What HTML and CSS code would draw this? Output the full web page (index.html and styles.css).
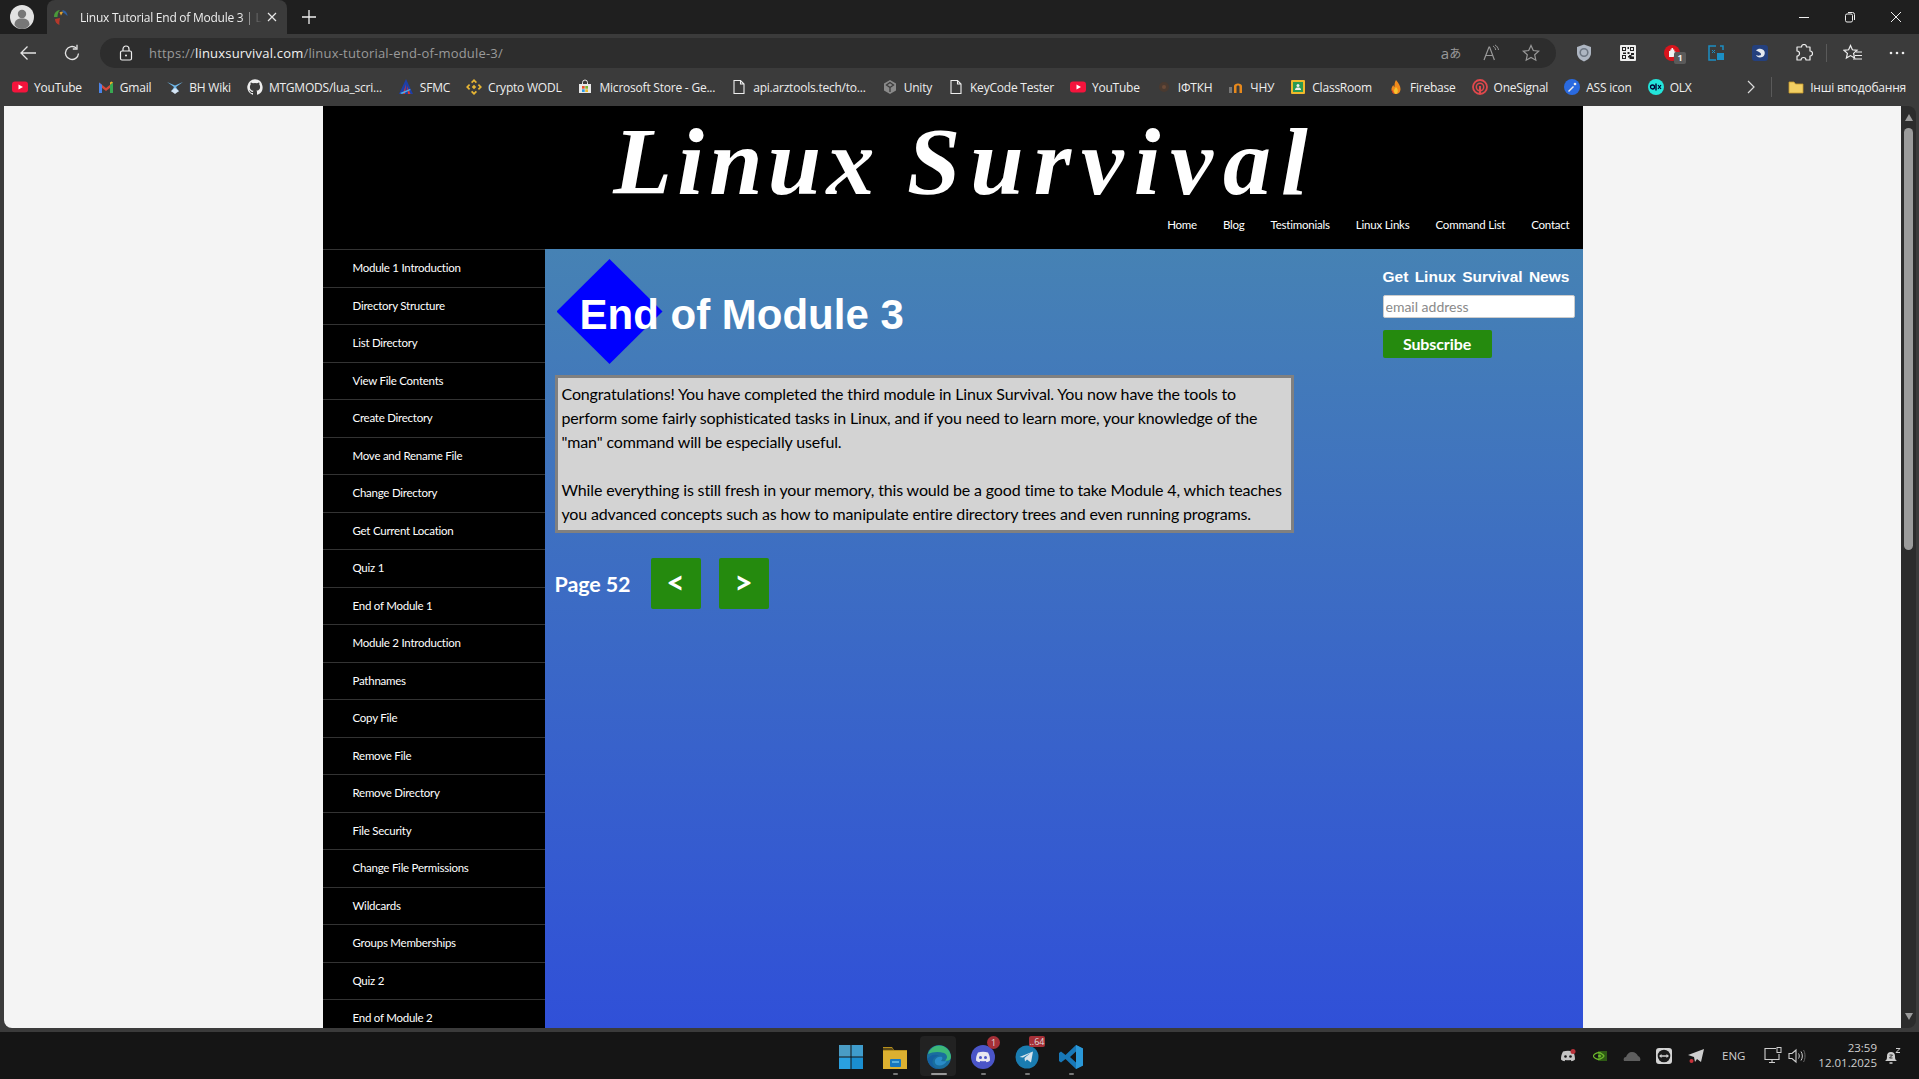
FILE: index.html
```html
<!DOCTYPE html>
<html>
<head>
<meta charset="utf-8">
<title>Linux Tutorial End of Module 3 | Linux Survival</title>
<link rel="stylesheet" href="styles.css">
</head>
<body>

<!-- browser: tabs -->
<div class="tabstrip">
	<div class="avatar">
		<svg viewBox="0 0 24 24" width="24" height="24"><circle cx="12" cy="12" r="12" fill="#e2e2e2"/><circle cx="12" cy="9" r="4.200" fill="#777"/><path d="M4.500 20c0-5 3-6.500 7.500-6.500s7.500 1.500 7.500 6.500c-2 2.500-4.500 4-7.500 4s-5.500-1.500-7.500-4z" fill="#777"/></svg>
	</div>
	<div class="tab">
		<svg class="favicon" viewBox="0 0 16 16" width="16" height="16"><path d="M1 8C1 4 3 1.500 7 1c-1.500 1.500-2.500 4-2.500 7z" fill="#4a9a3a"/><path d="M2 10c0 3 1.500 5 4.500 6 -.5-2 0-4 .5-7z" fill="#b5382a"/><path d="M9.500 1c3 .5 5 3 5 6-1.500-1.500-3-3-5-3.500z" fill="#2f5f9f"/><path d="M6.500 3.500c1-.8 2.500-1 3.500-.5L8 6.500z" fill="#e0a030"/></svg>
		<span class="tab-title">Linux Tutorial End of Module 3 | Li</span>
		<svg class="tab-close" viewBox="0 0 12 12" width="12" height="12"><path d="M2 2l8 8M10 2l-8 8" stroke="#e8e8e8" stroke-width="1.200"/></svg>
	</div>
	<svg class="newtab" viewBox="0 0 16 16" width="16" height="16"><path d="M8 1v14M1 8h14" stroke="#f0f0f0" stroke-width="1.300"/></svg>
	<div class="winctl">
		<span><svg viewBox="0 0 12 12" width="12" height="12"><path d="M1 6.500h10" stroke="#eee" stroke-width="1"/></svg></span>
		<span><svg viewBox="0 0 12 12" width="12" height="12"><rect x="1.500" y="3" width="7" height="8" rx="1.500" fill="none" stroke="#eee"/><path d="M4 1.500h4.500a2 2 0 0 1 2 2V9" fill="none" stroke="#eee"/></svg></span>
		<span><svg viewBox="0 0 12 12" width="12" height="12"><path d="M1 1l10 10M11 1L1 11" stroke="#eee" stroke-width="1"/></svg></span>
	</div>
</div>

<!-- browser: address bar -->
<div class="toolbar">
	<span class="tool"><svg viewBox="0 0 18 18" width="18" height="18"><path d="M17 9H2M8.500 2.500L2 9l6.500 6.500" fill="none" stroke="#e4e4e4" stroke-width="1.300"/></svg></span>
	<span class="tool"><svg viewBox="0 0 18 18" width="18" height="18"><path d="M15.500 9.500a6.500 6.500 0 1 1-2.200-5.400" fill="none" stroke="#e4e4e4" stroke-width="1.300"/><path d="M14 .8v4.200H9.800" fill="none" stroke="#e4e4e4" stroke-width="1.300"/></svg></span>
	<div class="address">
		<svg class="lock" viewBox="0 0 14 16" width="14" height="16"><rect x="1.500" y="6" width="11" height="9" rx="1.500" fill="none" stroke="#eee" stroke-width="1.200"/><path d="M4 6V4a3 3 0 0 1 6 0v2" fill="none" stroke="#eee" stroke-width="1.200"/><circle cx="7" cy="10.500" r="1" fill="#eee"/></svg>
		<span class="url">https://<b>linuxsurvival.com</b>/linux-tutorial-end-of-module-3/</span>
		<div class="address-tools">
			<span class="addr-tool translate">a<i>あ</i></span>
			<span class="addr-tool"><svg viewBox="0 0 18 18" width="18" height="18"><path d="M2 16L7 3h.6l4.800 13M3.800 11.500h7.200" fill="none" stroke="#999" stroke-width="1.200"/><path d="M11 2c1.500.8 2.500 2.200 2.700 4M13 1c2 1 3.200 2.800 3.500 5" fill="none" stroke="#999"/></svg></span>
			<span class="addr-tool"><svg viewBox="0 0 18 18" width="18" height="18"><path d="M9 1.500l2.300 5 5.400.6-4 3.700 1.100 5.400L9 13.500l-4.800 2.700 1.100-5.400-4-3.700 5.400-.6z" fill="none" stroke="#999" stroke-width="1.200"/></svg></span>
		</div>
	</div>
	<div class="extensions">
		<span class="tool"><svg viewBox="0 0 16 18" width="16" height="18"><path d="M8 .5l7 2.500v6c0 4-3 7-7 8.500-4-1.500-7-4.500-7-8.500V3z" fill="#aeb6c2"/><circle cx="8" cy="8.500" r="3.800" fill="none" stroke="#6d7682" stroke-width="1.600"/></svg></span>
		<span class="tool"><svg viewBox="0 0 16 16" width="16" height="16"><rect width="16" height="16" rx="1" fill="#eee"/><path d="M2 2h4v4H2zM3 3v2h2V3zM10 2h4v4h-4zM11 3v2h2V3zM2 10h4v4H2zM3 11v2h2v-2z" fill="#222" fill-rule="evenodd"/><path d="M7.500 2h1.500v2H7.500zM7.500 7h2v2h-2zM3 7.500h3V9H3zM11 8h3v2h-3zM9 10h2.500v1.500H14V14H9.500v-1.500H8V11h1z" fill="#222"/></svg></span>
		<span class="tool ext-badged"><svg viewBox="0 0 16 18" width="16" height="18"><circle cx="8" cy="9" r="8" fill="#d8141c"/><path d="M5 13V7h1.300V5.500h1.200V4h1.600v1.500h1.200v2H11.500v3L9.500 13z" fill="#f2f2f2"/></svg><em class="ext-count">1</em></span>
		<span class="tool"><svg viewBox="0 0 16 16" width="16" height="16"><path d="M8 1H1v14h7M12 1h3v4" fill="none" stroke="#1c8fc4" stroke-width="1.500"/><rect x="9" y="8" width="7" height="7" fill="#1c8fc4"/><path d="M4 5l3 3M7 5L4 8" stroke="#1c8fc4"/></svg></span>
		<span class="tool"><svg viewBox="0 0 16 16" width="16" height="16"><rect width="16" height="16" rx="3" fill="#24407e"/><path d="M4 5.500C6 3 11 3 12.500 6.500c1 3-1 6-4.500 6-2 0-3.500-1-4-2.500 2 1 4.500 1 5-.5.500-1.500-2-2.500-5-4z" fill="#e4e8ef"/></svg></span>
		<span class="tool"><svg viewBox="0 0 18 18" width="18" height="18"><path d="M6.500 3a2.500 2.500 0 0 1 5 0h3.500v4a2.500 2.500 0 0 1 0 5v4h-4a2.500 2.500 0 0 0-5 0H2v-4a2.500 2.500 0 0 0 0-5V3z" fill="none" stroke="#eee" stroke-width="1.200" stroke-linejoin="round"/></svg></span>
		<i class="tool-sep"></i>
		<span class="tool"><svg viewBox="0 0 20 18" width="20" height="18"><path d="M7.500 1.500l1.900 4.300 4.600.5-3.400 3.100 1 4.600-4.100-2.400-4.100 2.400 1-4.600L1 6.300l4.600-.5z" fill="none" stroke="#eee" stroke-width="1.200"/><path d="M13 8h6M12 11.500h7M10 15h9" stroke="#eee" stroke-width="1.200"/></svg></span>
		<span class="tool"><svg viewBox="0 0 16 4" width="16" height="4"><circle cx="2" cy="2" r="1.300" fill="#eee"/><circle cx="8" cy="2" r="1.300" fill="#eee"/><circle cx="14" cy="2" r="1.300" fill="#eee"/></svg></span>
	</div>
</div>

<!-- browser: favourites -->
<div class="bookmarks">
	<a class="bm"><svg class="bm-ic" viewBox="0 0 16 16"><rect y="2.500" width="16" height="11" rx="3" fill="#f4143c"/><path d="M6.500 5.500v5L11 8z" fill="#fff"/></svg>YouTube</a>
	<a class="bm"><svg class="bm-ic" viewBox="0 0 16 16"><path d="M1 3.500l7 5.500 7-5.500v3l-7 5.500-7-5.500z" fill="#d8483a"/><path d="M1 14V3.500l3 2.300V14z" fill="#4a84e8"/><path d="M15 14V3.500l-3 2.300V14z" fill="#38a852"/><path d="M12 5.800L15 3.500 13.500 2.500 12 3.500z" fill="#f0b92a"/></svg>Gmail</a>
	<a class="bm"><svg class="bm-ic" viewBox="0 0 16 16"><path d="M0 3l7 5-3 5 4-3 4 3-3-5 7-5-8 3.500z" fill="#6eb6e8"/><path d="M4 12l4-3 4 3-4 3z" fill="#d4e4f4"/></svg>BH Wiki</a>
	<a class="bm"><svg class="bm-ic" viewBox="0 0 16 16"><path d="M8 .3a8 8 0 0 0-2.500 15.500c.4.100.5-.2.500-.4v-1.400c-2.200.5-2.700-1-2.700-1-.4-.9-.9-1.200-.9-1.200-.7-.5.100-.5.100-.5.800.100 1.200.8 1.200.8.700 1.200 1.900.9 2.300.7.100-.5.300-.9.500-1.100-1.800-.2-3.600-.9-3.600-4 0-.9.300-1.600.8-2.100-.1-.2-.4-1 .100-2.100 0 0 .7-.2 2.200.8a7.600 7.600 0 0 1 4 0c1.500-1 2.200-.8 2.200-.8.400 1.100.200 1.900.100 2.100.5.600.8 1.300.8 2.100 0 3.100-1.900 3.700-3.700 3.900.300.300.6.800.6 1.500v2.200c0 .2.100.5.600.4A8 8 0 0 0 8 .3z" fill="#eee"/></svg>MTGMODS/lua_scri...</a>
	<a class="bm"><svg class="bm-ic" viewBox="0 0 16 16"><path d="M8 0l7 15H1z" fill="#1c3fa8"/><path d="M8 5l-3 10h2zM9 7l1 8h2.500z" fill="#e0342c"/><path d="M2 14l10-4 .5 1L4 15z" fill="#4fb0e8"/></svg>SFMC</a>
	<a class="bm"><svg class="bm-ic" viewBox="0 0 16 16"><path d="M8 0l3 3-1.200 1.200L8 2.400 6.200 4.200 5 3zM3 5l1.200 1.200L2.400 8l1.800 1.800L3 11 0 8zM13 5l3 3-3 3-1.200-1.200L13.600 8l-1.800-1.800zM5 13l1.200-1.200L8 13.600l1.800-1.800L11 13l-3 3z" fill="#e8b634"/><path d="M8 5.800L10.200 8 8 10.200 5.800 8z" fill="#e8b634"/></svg>Crypto WODL</a>
	<a class="bm"><svg class="bm-ic" viewBox="0 0 16 16"><path d="M2 5h12v9H2z" fill="#e8e8e8"/><path d="M5.500 5V3.500a2.500 2.500 0 0 1 5 0V5" fill="none" stroke="#e8e8e8"/><path d="M5 7h2.700v2.700H5z" fill="#e8512c"/><path d="M8.300 7H11v2.700H8.300z" fill="#7ab52c"/><path d="M5 10.300h2.700V13H5z" fill="#2c9de8"/><path d="M8.300 10.300H11V13H8.300z" fill="#f0b92a"/></svg>Microsoft Store - Ge...</a>
	<a class="bm"><svg class="bm-ic" viewBox="0 0 16 16"><path d="M3 1.500h6.500L13 5v9.500H3z M9.500 1.500V5H13" fill="none" stroke="#eee" stroke-width="1.100"/></svg>api.arztools.tech/to...</a>
	<a class="bm"><svg class="bm-ic" viewBox="0 0 16 16"><path d="M8 1l6 3.500v7L8 15l-6-3.500v-7z" fill="#8a8a8a"/><path d="M8 3.500L4.500 6 8 8.500 11.500 6zM8 8.500V13" fill="none" stroke="#3b3b3b" stroke-width="1.300"/></svg>Unity</a>
	<a class="bm"><svg class="bm-ic" viewBox="0 0 16 16"><path d="M3 1.500h6.500L13 5v9.500H3z M9.500 1.500V5H13" fill="none" stroke="#eee" stroke-width="1.100"/></svg>KeyCode Tester</a>
	<a class="bm"><svg class="bm-ic" viewBox="0 0 16 16"><rect y="2.500" width="16" height="11" rx="3" fill="#f4143c"/><path d="M6.500 5.500v5L11 8z" fill="#fff"/></svg>YouTube</a>
	<a class="bm"><svg class="bm-ic" viewBox="0 0 16 16"><circle cx="8" cy="8" r="5" fill="#4a3a30"/><circle cx="8" cy="8" r="2" fill="#6a4a38"/></svg>ІФТКН</a>
	<a class="bm"><svg class="bm-ic" viewBox="0 0 16 16"><path d="M6 14V7c0-3.500 8-3.500 8 0v7h-2.500V7.500c0-1.500-3-1.500-3 0V14z" fill="#e8891c"/><path d="M1 14V8h3v6z" fill="#777"/></svg>ЧНУ</a>
	<a class="bm"><svg class="bm-ic" viewBox="0 0 16 16"><rect x="1" y="1" width="14" height="14" rx="1" fill="#f0b92a"/><rect x="3" y="3" width="10" height="10" fill="#2a9a52"/><circle cx="8" cy="6.500" r="1.500" fill="#eee"/><path d="M5 11c0-2 1.500-2.500 3-2.500s3 .5 3 2.500z" fill="#eee"/></svg>ClassRoom</a>
	<a class="bm"><svg class="bm-ic" viewBox="0 0 16 16"><path d="M8 1c2.500 3 4.500 6 4.500 9 0 3-2 5-4.500 5s-4.500-2-4.500-5c0-1.500 1-3 2-4 0 1 .5 1.500 1 2 0-2 0-5 1.500-7z" fill="#f08a1c"/><path d="M8 8c1.500 1.500 2 3 1.800 4.500C9.500 14 8.500 15 8 15s-2-1-2-3c0-1.500 1-2.500 2-4z" fill="#f4c430"/><path d="M3.500 10l3 5c-1.800-.4-3-2.500-3-5z" fill="#d8342c"/></svg>Firebase</a>
	<a class="bm"><svg class="bm-ic" viewBox="0 0 16 16"><circle cx="8" cy="8" r="7" fill="none" stroke="#e0484c" stroke-width="1.800"/><circle cx="8" cy="8" r="3.700" fill="none" stroke="#e0484c" stroke-width="1.500"/><path d="M7 7h2v8H7z" fill="#e0484c"/></svg>OneSignal</a>
	<a class="bm"><svg class="bm-ic" viewBox="0 0 16 16"><circle cx="8" cy="8" r="8" fill="#2a6ae0"/><path d="M4 12l5-5 1 1-5 5z" fill="#eee"/><circle cx="11" cy="5" r="1.300" fill="#eee"/></svg>ASS icon</a>
	<a class="bm"><svg class="bm-ic" viewBox="0 0 16 16"><circle cx="8" cy="8" r="8" fill="#23e5db"/><circle cx="4.500" cy="8" r="2" fill="none" stroke="#003" stroke-width="1.300"/><path d="M8 4.500V11.500" stroke="#003" stroke-width="1.400"/><path d="M10 6l3 4M13 6l-3 4" stroke="#003" stroke-width="1.200"/></svg>OLX</a>
	<svg class="bm-more" viewBox="0 0 8 14" width="8" height="14"><path d="M1 1l6 6-6 6" fill="none" stroke="#ddd" stroke-width="1.200"/></svg>
	<i class="bm-sep"></i>
	<a class="bm"><svg class="bm-ic" viewBox="0 0 16 16"><path d="M1 3h5l1.500 2H15v9H1z" fill="#f2cf63" stroke="#c79a2c" stroke-width=".8"/></svg>Інші вподобання</a>
</div>

<!-- the page itself -->
<div class="viewport">
	<div class="page">
		<div class="site">
			<header class="site-head">
				<div class="site-title">Linux <span>Survival</span></div>
				<nav class="topnav">
					<a>Home</a><a>Blog</a><a>Testimonials</a><a>Linux Links</a><a>Command List</a><a>Contact</a>
				</nav>
			</header>
			<div class="site-body">
				<ul class="sidenav">
					<li>Module 1 Introduction</li>
					<li>Directory Structure</li>
					<li>List Directory</li>
					<li>View File Contents</li>
					<li>Create Directory</li>
					<li>Move and Rename File</li>
					<li>Change Directory</li>
					<li>Get Current Location</li>
					<li>Quiz 1</li>
					<li>End of Module 1</li>
					<li>Module 2 Introduction</li>
					<li>Pathnames</li>
					<li>Copy File</li>
					<li>Remove File</li>
					<li>Remove Directory</li>
					<li>File Security</li>
					<li>Change File Permissions</li>
					<li>Wildcards</li>
					<li>Groups Memberships</li>
					<li>Quiz 2</li>
					<li>End of Module 2</li>
				</ul>
				<main class="content">
					<div class="lesson">
						<div class="lesson-head">
							<i class="diamond"></i>
							<h1>End of Module 3</h1>
						</div>
						<div class="lesson-text">
							Congratulations! You have completed the third module in Linux Survival. You now have the tools to perform some fairly sophisticated tasks in Linux, and if you need to learn more, your knowledge of the "man" command will be especially useful.<br><br>While everything is still fresh in your memory, this would be a good time to take Module 4, which teaches you advanced concepts such as how to manipulate entire directory trees and even running programs.
						</div>
						<div class="pager">
							<span class="pagenum">Page 52</span>
							<a class="pagebtn">&lt;</a>
							<a class="pagebtn">&gt;</a>
						</div>
					</div>
					<aside class="news">
						<h3>Get Linux Survival News</h3>
						<input class="news-input" type="text" placeholder="email address">
						<button class="news-btn">Subscribe</button>
					</aside>
				</main>
			</div>
		</div>
	</div>
	<div class="scrollbar">
		<i class="sb-up"></i>
		<i class="sb-thumb"></i>
		<i class="sb-down"></i>
	</div>
</div>

<!-- windows taskbar -->
<div class="taskbar">
	<div class="task-icons">
		<span class="task"><svg viewBox="0 0 24 24" width="24" height="24"><path d="M0 0h11.500v11.500H0z" fill="#4a9cc4"/><path d="M12.500 0H24v11.500H12.500z" fill="#3f9ccc"/><path d="M0 12.500h11.500V24H0z" fill="#2aa0e0"/><path d="M12.500 12.500H24V24H12.500z" fill="#1a8ed0"/></svg></span>
		<span class="task is-open"><svg viewBox="0 0 24 24" width="24" height="24"><path d="M0 2h9l2 3h13v19H0z" fill="#b8901c"/><path d="M0 6h24v18H0z" fill="#dcb030"/><path d="M0 3h9l1.500 2H0z" fill="#5c4a18"/><rect x="7" y="14" width="11" height="8" rx="1" fill="#1878c0"/><rect x="9" y="16" width="7" height="2" fill="#58b0e0"/></svg></span>
		<span class="task is-open is-active"><svg viewBox="0 0 24 24" width="24" height="24"><circle cx="12" cy="12" r="12" fill="#1a6e9e"/><path d="M1 9C3 2 10-1 16 1c5 2 8 7 8 11 0 3-3 4.500-6 3.500 3-2 2.500-6-1-7.500C11 6 5 7 1 9z" fill="#3cb878"/><path d="M12 11c-4 0-7 3-6.500 7 .5 3 4 6 8 6-6 1-12-3-13-10 2-3 7-6 11.500-3z" fill="#1460a0"/><path d="M8 15c1-3 5-4 7-3 1 1 0 3-1 4 2 .5 4 .5 6-.5-2 5-8 6-11 4-1-1-1.500-3-1-4.500z" fill="#2a8cc8"/></svg></span>
		<span class="task is-open"><svg viewBox="0 0 24 24" width="24" height="24"><circle cx="12" cy="12" r="12" fill="#4a55c8"/><path d="M7 7.500c3-1 7-1 10 0 1.500 2.500 2 5 2 8-1.200 1-2.500 1.500-3.500 1.700L14.700 16c-2 .4-3.500.4-5.400 0l-.8 1.200C7.500 17 6.200 16.500 5 15.500c0-3 .5-5.500 2-8z" fill="#e8e8f0"/><circle cx="9.500" cy="12.500" r="1.500" fill="#4a55c8"/><circle cx="14.500" cy="12.500" r="1.500" fill="#4a55c8"/></svg><em class="task-badge round">1</em></span>
		<span class="task is-open"><svg viewBox="0 0 24 24" width="24" height="24"><circle cx="12" cy="12" r="11.500" fill="#1a7cb0"/><path d="M4.500 12L18 6.500l-2 11-4-3-2 2-.5-3.500 6-5-7.500 4.500z" fill="#d8e4ec"/></svg><em class="task-badge wide">..64</em></span>
		<span class="task is-open"><svg viewBox="0 0 24 24" width="24" height="24"><path d="M17 0l7 3.500v17L17 24 6.500 14 2 17.500 0 16v-8l2-1.500L6.500 10zM17 6.500L11 12l6 5.500z" fill="#1878b8"/><path d="M17 0l7 3.500v17L17 24z" fill="#2a98d8"/></svg></span>
	</div>
	<div class="tray">
		<span class="tray-ic"><svg viewBox="0 0 16 14" width="16" height="14"><path d="M3 2.500c3-1 7-1 10 0 1.500 2.500 2 5 2 8-1.200 1-2.500 1.500-3.500 1.700l-.8-1.200c-2 .4-3.400.4-5.400 0l-.8 1.200C3.500 12 2.200 11.500 1 10.500c0-3 .5-5.500 2-8z" fill="#c4c4c4"/><circle cx="5.500" cy="7.500" r="1.300" fill="#151515"/><circle cx="10.500" cy="7.500" r="1.300" fill="#151515"/><circle cx="13" cy="2.500" r="2.500" fill="#b8323a"/></svg></span>
		<span class="tray-ic"><svg viewBox="0 0 14 12" width="14" height="12"><path d="M5 1v10h9V1z" fill="#2e5a14"/><path d="M0 6c2-3 6-4.500 9-2 1.500 1 2 2 2 2s-1 1.500-2 2C6 10.500 2 9 0 6z" fill="none" stroke="#6db82c" stroke-width="1.300"/><circle cx="6.500" cy="6" r="1.500" fill="#6db82c"/></svg></span>
		<span class="tray-ic"><svg viewBox="0 0 18 10" width="18" height="10"><path d="M1 10c-1-2 0-4 2-4 1-3 3-5 6-5s5 2 6 4c2 .5 3 3 2 5z" fill="#5e5e5e"/></svg></span>
		<span class="tray-ic"><svg viewBox="0 0 16 16" width="16" height="16"><rect width="16" height="16" rx="3" fill="#d4d4d4"/><circle cx="8" cy="8" r="6.300" fill="#1c1c1c"/><path d="M3 8l2.500-2v1.200h5V6L13 8l-2.500 2V8.800h-5V10z" fill="#d4d4d4"/></svg></span>
		<span class="tray-ic"><svg viewBox="0 0 16 16" width="16" height="16"><path d="M0 7l16-6-3 13-4-3-2 3-1-5z" fill="#cfcfcf"/><circle cx="3.500" cy="13" r="2" fill="#c8323a"/></svg></span>
		<span class="tray-lang">ENG</span>
		<span class="tray-net"><svg viewBox="0 0 18 17" width="18" height="17"><path d="M12 1.500H1v11h14V7M5 15.500h6M8 12.500v3" fill="none" stroke="#cfcfcf" stroke-width="1.100"/><rect x="13" y=".5" width="4" height="5" fill="none" stroke="#cfcfcf"/></svg></span>
		<span class="tray-vol"><svg viewBox="0 0 18 16" width="18" height="16"><path d="M1 5.500h3L8 2v12L4 10.500H1z" fill="none" stroke="#cfcfcf" stroke-width="1.100"/><path d="M10.500 5.500c1 1.500 1 3.500 0 5M13 3.500c1.800 2.500 1.800 6.500 0 9" fill="none" stroke="#cfcfcf"/><path d="M15.500 2c2 3 2 9 0 12" fill="none" stroke="#666"/></svg></span>
		<span class="clock"><span>23:59</span><span>12.01.2025</span></span>
		<span class="tray-bell"><svg viewBox="0 0 18 18" width="18" height="18"><path d="M1 14c2-1 2-3 2-5 0-2.500 1.500-4 4-4s4 1.500 4 4c0 2 0 4 2 5z" fill="#cfcfcf"/><path d="M5.500 16h3" stroke="#cfcfcf" stroke-width="1.500"/><path d="M5.500 8h3l-3 3h3" fill="none" stroke="#333"/><path d="M12 1.500h4l-4 4h4" fill="none" stroke="#cfcfcf"/></svg></span>
	</div>
</div>

</body>
</html>
```

FILE: styles.css
```css
*{
	box-sizing: border-box;
}

html, body{
	margin: 0;
	height: 100%;
	overflow: hidden;
}

body{
	display: flex;
	flex-direction: column;
	background: #3b3b3b;
	font-family: "Open Sans", sans-serif;
	color: #eee;
}

svg{
	display: block;
	flex: none;
}

/* ---- tab strip ---- */
.tabstrip{
	display: flex;
	align-items: center;
	height: 34px;
	background: #1f1f1f;
	flex: none;
}

.avatar{
	width: 47px;
	padding-left: 10px;
}

.tab{
	display: flex;
	align-items: center;
	width: 240px;
	height: 34px;
	padding: 0 8px 0 6px;
	background: #3b3b3b;
	border-radius: 8px 8px 0 0;
}

.favicon{
	margin-right: 11px;
}

.tab-title{
	flex: 1;
	min-width: 0;
	white-space: nowrap;
	font-size: 12px;
	letter-spacing: -.25px;
	color: #eee;
	-webkit-mask-image: linear-gradient(90deg, #000 88%, transparent);
	mask-image: linear-gradient(90deg, #000 88%, transparent);
}

.tab-close{
	margin: 0 1px 0 4px;
}

.newtab{
	margin-left: 14px;
}

.winctl{
	display: flex;
	margin-left: auto;
}

.winctl span{
	display: flex;
	justify-content: center;
	width: 46px;
}

/* ---- toolbar ---- */
.toolbar{
	display: flex;
	align-items: center;
	height: 34px;
	padding: 4px 0 0 6px;
	background: #3b3b3b;
	flex: none;
}

.tool{
	position: relative;
	display: flex;
	justify-content: center;
	width: 44px;
	flex: none;
}

.address{
	display: flex;
	align-items: center;
	flex: 1;
	height: 30px;
	margin-left: 6px;
	padding: 0 5px 0 19px;
	background: #2d2d2d;
	border-radius: 15px;
}

.url{
	margin-left: 16px;
	font-size: 13px;
	letter-spacing: .2px;
	color: #9a9a9a;
}

.url b{
	font-weight: 400;
	color: #f2f2f2;
}

.address-tools{
	display: flex;
	margin-left: auto;
}

.addr-tool{
	display: flex;
	justify-content: center;
	width: 40px;
}

.translate{
	font-size: 15px;
	line-height: 18px;
	color: #999;
}

.translate i{
	font-style: normal;
	font-family: "Noto Sans CJK JP", sans-serif;
	font-size: 12px;
	line-height: 18px;
}

.extensions{
	display: flex;
	align-items: center;
	margin-left: 6px;
}

.ext-count{
	position: absolute;
	top: 8px;
	left: 24px;
	width: 12px;
	height: 12px;
	background: #5a5a5a;
	border-radius: 2px;
	font: 700 9px/12px "Open Sans", sans-serif;
	text-align: center;
	color: #eee;
}

.tool-sep{
	width: 1px;
	height: 18px;
	margin: 0 4px 0 0;
	background: #5a5a5a;
}

/* ---- favourites bar ---- */
.bookmarks{
	display: flex;
	align-items: center;
	gap: 16px;
	height: 38px;
	padding: 0 13px 0 12px;
	background: #3b3b3b;
	flex: none;
	white-space: nowrap;
}

.bm{
	display: flex;
	align-items: center;
	gap: 6px;
	font-size: 12px;
	letter-spacing: -.22px;
	color: #eee;
}

.bm-ic{
	width: 16px;
	height: 16px;
}

.bm-more{
	margin-left: auto;
}

.bm-sep{
	width: 1px;
	height: 20px;
	background: #5a5a5a;
}

/* ---- viewport ---- */
.viewport{
	display: flex;
	flex: 1;
	min-height: 0;
	padding: 0 3px 4px 4px;
}

.page{
	flex: 1;
	min-width: 0;
	overflow: hidden;
	background: #f4f4f4;
	border-radius: 0 0 0 8px;
}

.site{
	display: flex;
	flex-direction: column;
	width: 1260px;
	height: 100%;
	margin: 0 auto;
	background: #000;
}

.site-head{
	height: 143px;
	padding-top: 2px;
	flex: none;
}

.site-title{
	height: 108px;
	padding-left: 26px;
	font: italic 700 96px/108px "Liberation Serif", serif;
	letter-spacing: 5.250px;
	word-spacing: -2px;
	text-align: center;
	color: #fff;
}

.site-title span{
	letter-spacing: 10px;
}

.topnav{
	display: flex;
	justify-content: flex-end;
	gap: 26px;
	padding: 0 13px 0 0;
	font: 400 11.500px/18px Lato, sans-serif;
	letter-spacing: -.22px;
	color: #fff;
}

.site-body{
	display: flex;
	flex: 1;
	min-height: 0;
}

.sidenav{
	width: 222px;
	margin: 0;
	padding: 0;
	list-style: none;
	flex: none;
	overflow: hidden;
}

.sidenav li{
	height: 37.500px;
	padding-left: 30px;
	border-top: 1px solid #333;
	font: 400 11.500px/36px Lato, sans-serif;
	letter-spacing: -.25px;
	color: #fff;
}

.content{
	display: flex;
	flex: 1;
	min-width: 0;
	padding: 10px 8px 0 10px;
	background: linear-gradient(#4682b4, #3050d8);
}

.lesson{
	width: 739px;
	margin-right: 89px;
}

.lesson-head{
	position: relative;
	display: flex;
	align-items: center;
	height: 105px;
	padding: 7px 0 0 25px;
}

.lesson-head h1{
	position: relative;
	margin: 0;
	font: 700 42px/48px "Liberation Sans", sans-serif;
	color: #fff;
}

.diamond{
	position: absolute;
	top: 0;
	left: 2px;
	width: 106px;
	height: 105px;
	background: #00f;
	clip-path: polygon(50% 0, 100% 50%, 50% 100%, 0 50%);
}

.lesson-text{
	margin-top: 11px;
	padding: 4px;
	border: 3px solid #808080;
	background: #d3d3d3;
	font: 400 16px/24px Lato, sans-serif;
	letter-spacing: -.15px;
	color: #000;
}

.pager{
	display: flex;
	align-items: center;
	margin-top: 24px;
}

.pagenum{
	width: 96px;
	padding-top: 2px;
	font: 700 21.500px/51px Lato, sans-serif;
	letter-spacing: -.1px;
	color: #fff;
}

.pagebtn{
	width: 50px;
	height: 51px;
	margin-right: 18px;
	background: #258a0e;
	border-radius: 2px;
	font: 700 32px/48px Lato, sans-serif;
	text-align: center;
	color: #fff;
}

.news{
	width: 192px;
	flex: none;
}

.news h3{
	margin: 8px 0 8px;
	font: 700 15.500px/20px "Liberation Sans", sans-serif;
	word-spacing: 2px;
	white-space: nowrap;
	color: #fff;
}

.news-input{
	display: block;
	width: 192px;
	height: 23px;
	padding: 0 2px;
	border: 1px solid #ccc;
	border-radius: 2px;
	background: #fff;
	font: 400 14px Lato, sans-serif;
}

.news-input::placeholder{
	color: #8a8a8a;
}

.news-btn{
	display: block;
	width: 109px;
	height: 28px;
	margin-top: 12px;
	padding: 0 0 2px;
	border: 0;
	border-radius: 2px;
	background: #258a0e;
	font: 700 16px Lato, sans-serif;
	letter-spacing: -.1px;
	color: #fff;
}

/* ---- scrollbar ---- */
.scrollbar{
	display: flex;
	flex-direction: column;
	align-items: center;
	width: 15px;
	padding-top: 8px;
	background: #2c2c2c;
	border-radius: 0 8px 8px 0;
	flex: none;
}

.sb-up, .sb-down{
	width: 0;
	height: 0;
	border-left: 4.500px solid transparent;
	border-right: 4.500px solid transparent;
}

.sb-up{
	border-bottom: 7px solid #9b9b9b;
}

.sb-down{
	margin-top: auto;
	margin-bottom: 8px;
	border-top: 7px solid #9b9b9b;
}

.sb-thumb{
	width: 9px;
	height: 422px;
	margin-top: 7px;
	background: #9b9b9b;
	border-radius: 5px;
}

/* ---- taskbar ---- */
.taskbar{
	display: flex;
	align-items: center;
	height: 47px;
	padding-left: 829px;
	background: #151515;
	flex: none;
}

.task-icons{
	display: flex;
}

.task{
	position: relative;
	display: flex;
	justify-content: center;
	align-items: center;
	width: 44px;
	height: 47px;
	padding-top: 2px;
}

.task.is-open::after{
	content: "";
	position: absolute;
	bottom: 4px;
	left: 20px;
	width: 5px;
	height: 2px;
	background: #777;
	border-radius: 1px;
}

.task.is-active::before{
	content: "";
	position: absolute;
	top: 4px;
	left: 3px;
	width: 36px;
	height: 40px;
	background: #222;
	border-radius: 4px;
}

.task.is-active svg{
	position: relative;
}

.task.is-active::after{
	left: 14px;
	width: 16px;
	background: #999;
}

.task-badge{
	position: absolute;
	top: 4px;
	font-style: normal;
	font-size: 9px;
	line-height: 11px;
	text-align: center;
	color: #ddd;
	background: #a63038;
}

.task-badge.round{
	left: 26px;
	width: 13px;
	height: 13px;
	border-radius: 50%;
	line-height: 13px;
}

.task-badge.wide{
	left: 24px;
	width: 16px;
	border-radius: 2px;
}

.tray{
	display: flex;
	align-items: center;
	margin-left: 459px;
	height: 47px;
	color: #cfcfcf;
}

.tray-ic{
	display: flex;
	justify-content: center;
	width: 32px;
}

.tray-lang{
	width: 26px;
	margin-left: 10px;
	font-size: 11.500px;
}

.tray-net{
	margin-left: 16px;
}

.tray-vol{
	margin-left: 6px;
}

.clock{
	display: flex;
	flex-direction: column;
	align-items: flex-end;
	width: 71px;
	margin-top: -2px;
	font-size: 11.500px;
	line-height: 15px;
}

.tray-bell{
	margin-left: 7px;
}
```
